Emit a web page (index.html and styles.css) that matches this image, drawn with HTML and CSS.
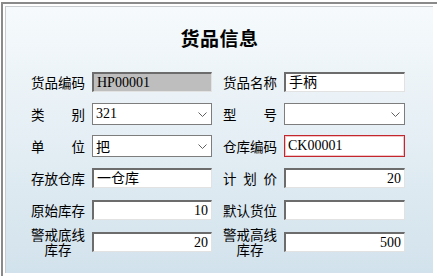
FILE: index.html
```html
<!DOCTYPE html>
<html lang="zh-CN">
<head>
    <meta charset="UTF-8">
    <title>货品信息</title>
    <link rel="stylesheet" href="styles.css">
</head>
<body>

<div class="frame">
    <div class="panel">
        <h1 class="title">货品信息</h1>

        <div class="form">
            <div class="field">
                <label class="lbl">货品编码</label>
                <div class="box readonly code">HP00001</div>
            </div>
            <div class="field">
                <label class="lbl">货品名称</label>
                <div class="box">手柄</div>
            </div>

            <div class="field">
                <label class="lbl">类别</label>
                <div class="combo"><span>321</span><svg width="9" height="5" viewBox="0 0 9 5"><path d="M0.5 0.5 L4.5 4.5 L8.5 0.5" fill="none" stroke="#606060"/></svg></div>
            </div>
            <div class="field">
                <label class="lbl">型号</label>
                <div class="combo"><span></span><svg width="9" height="5" viewBox="0 0 9 5"><path d="M0.5 0.5 L4.5 4.5 L8.5 0.5" fill="none" stroke="#606060"/></svg></div>
            </div>

            <div class="field">
                <label class="lbl">单位</label>
                <div class="combo"><span>把</span><svg width="9" height="5" viewBox="0 0 9 5"><path d="M0.5 0.5 L4.5 4.5 L8.5 0.5" fill="none" stroke="#606060"/></svg></div>
            </div>
            <div class="field">
                <label class="lbl">仓库编码</label>
                <div class="box error code">CK00001</div>
            </div>

            <div class="field">
                <label class="lbl">存放仓库</label>
                <div class="box">一仓库</div>
            </div>
            <div class="field">
                <label class="lbl">计划价</label>
                <div class="box num">20</div>
            </div>

            <div class="field">
                <label class="lbl">原始库存</label>
                <div class="box num">10</div>
            </div>
            <div class="field">
                <label class="lbl">默认货位</label>
                <div class="box"></div>
            </div>

            <div class="field">
                <label class="lbl two">警戒底线<br>库存</label>
                <div class="box num">20</div>
            </div>
            <div class="field">
                <label class="lbl two">警戒高线<br>库存</label>
                <div class="box num">500</div>
            </div>
        </div>
    </div>
</div>

</body>
</html>
```

FILE: styles.css
```css
body { margin: 0; background: #fff; font-family: "Noto Sans CJK SC", "Liberation Sans", sans-serif; color: #000; }
.frame { width: 432px; height: 270px; margin: 2px 0 0 1px; border-top: 2px solid #8a8a8a; border-left: 2px solid #8a8a8a; padding: 2px 0 0 2px; }
.panel { height: 266px; width: 427px; border-top: 1px solid #c9ccce; border-left: 1px solid #c9ccce; background: linear-gradient(#f6fafc, #d2e2ec); }
.title { margin: 0; padding-top: 18px; text-align: center; font-size: 19px; line-height: 26px; font-weight: bold; letter-spacing: 0.5px; }
.form { display: grid; grid-template-columns: 181px 182px; grid-auto-rows: 32px; column-gap: 11px; padding: 15px 0 0 25px; }
.field { display: flex; align-items: center; gap: 7px; }
.lbl { width: 54px; flex: none; font-size: 13.5px; line-height: 16px; text-align: justify; text-align-last: justify; white-space: nowrap; }
.lbl.two { text-align: center; text-align-last: center; line-height: 15px; }
.box { box-sizing: border-box; width: 100%; height: 20px; padding: 0 3px; background: #fff; border-top: 2px solid #6c6c6c; border-left: 2px solid #6c6c6c; border-right: 1px solid #e2e2e2; border-bottom: 1px solid #e2e2e2; font-family: "Liberation Serif", "Noto Sans CJK SC", serif; font-size: 14px; line-height: 17px; white-space: nowrap; }
.box.readonly { background: #bebebe; }
.box.error { height: 22px; border: 1px solid #c3262c; box-shadow: inset 0 0 0 1px #f2c4c6; line-height: 19px; }
.box.num { text-align: right; }
.code { font-size: 14px; }
.combo { box-sizing: border-box; width: 100%; height: 22px; display: flex; align-items: center; justify-content: space-between; padding: 0 4px 0 3px; background: #fff; border: 1px solid #7d7d7d; font-family: "Liberation Serif", "Noto Sans CJK SC", serif; font-size: 14px; }
.combo svg { flex: none; margin-top: 1px; }
```
